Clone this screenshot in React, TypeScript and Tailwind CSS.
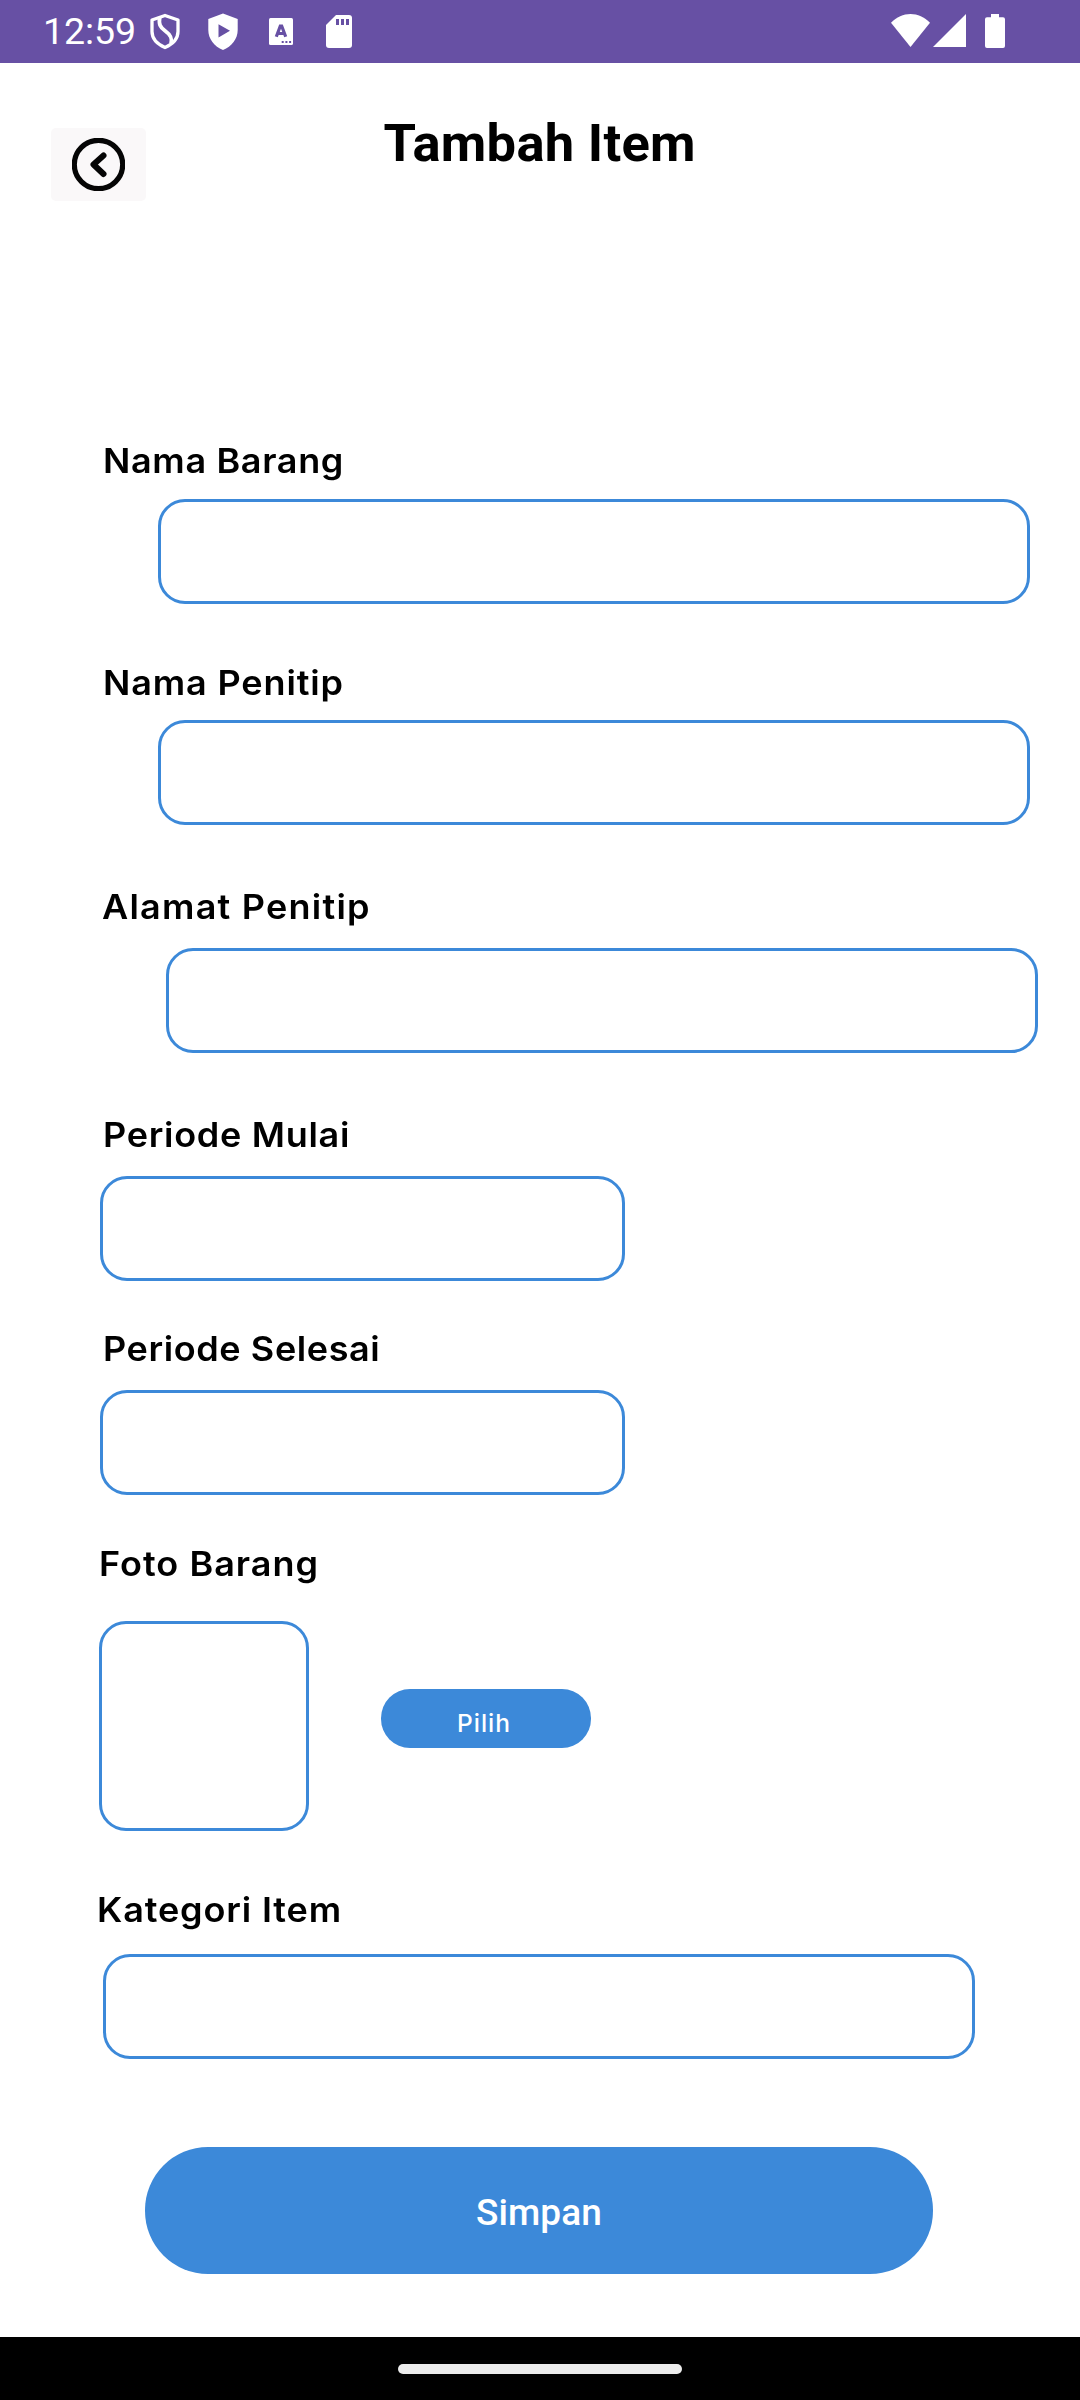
import React from "react";

type FieldProps = {
  label: string;
  labelClass: string;
  boxClass: string;
};

const labelBase =
  "block w-max h-[44px] origin-left scale-x-[1.06] whitespace-nowrap font-[Inter,sans-serif] text-[34px] leading-[44px] font-semibold text-black";
const boxBase = "block rounded-[27px] border-[3px] border-[#3c89d9] bg-white outline-none";

function Field({ label, labelClass, boxClass }: FieldProps) {
  return (
    <label className="block">
      <span className={`${labelBase} ${labelClass}`}>{label}</span>
      <input type="text" aria-label={label} className={`${boxBase} h-[105px] px-6 ${boxClass}`} />
    </label>
  );
}

function StatusBar() {
  return (
    <header className="flex h-[63px] items-start bg-[#6750a4] text-white">
      <span className="ml-[43px] mt-[9px] h-[44px] w-[107px] text-[37.5px] leading-[44px] tracking-[-0.1px]">12:59</span>
      <svg className="mt-[13px] h-[37px] w-[30px]" viewBox="0 0 30 37" fill="none" stroke="currentColor" strokeWidth="3.300">
        <path d="M15 2.500 28 7v11.500c0 6.500-5 12.500-13 16C7 31 2 25 2 18.500V7Z" strokeLinejoin="round" />
        <path d="M9.700 4c-1 7.500.2 10 5.300 13.700 6 4.300 7.500 7.800 6 13" strokeWidth="3.800" />
      </svg>
      <svg className="ml-[28px] mt-[13px] h-[37px] w-[30px]" viewBox="0 0 30 37" fill="currentColor">
        <path fillRule="evenodd" d="M15 .4 29.700 6v11c0 9-6 16.500-14.700 20C6.300 33.500.3 26 .3 17V6ZM10.500 11.200v13.300L22 17.800Z" />
      </svg>
      <svg className="ml-[31px] mt-[18px] h-[27px] w-[24px]" viewBox="0 0 24 27">
        <rect width="24" height="27" rx="1.500" fill="currentColor" />
        <path d="M7.300 18.800 11.300 8h1.400l4 10.800M9 15.500h6" fill="none" stroke="#6750a4" strokeWidth="3.200" />
        <path d="M12.700 23h2v2h-2ZM16.400 23h2v2h-2ZM20.100 23h2v2h-2Z" fill="#6750a4" />
      </svg>
      <svg className="ml-[33px] mt-[15px] h-[33px] w-[26px]" viewBox="0 0 26 33">
        <path d="M10 0h13q3 0 3 3v27q0 3-3 3H3q-3 0-3-3V10Z" fill="currentColor" />
        <path d="M10 4h3v6h-3ZM15 4h3v6h-3ZM20 4h3v6h-3Z" fill="#6750a4" />
      </svg>
      <svg className="ml-auto mt-[14px] h-[33px] w-[39px]" viewBox="0 0 39 33" fill="currentColor">
        <path d="M0 8.800C11-2.900 28-2.900 39 8.800L19.500 33Z" />
      </svg>
      <svg className="ml-[3px] mt-[14px] h-[33px] w-[33px]" viewBox="0 0 33 33" fill="currentColor">
        <path d="M33 0v33H0Z" />
      </svg>
      <svg className="ml-[19px] mr-[75px] mt-[14px] h-[34px] w-[20px]" viewBox="0 0 20 34" fill="currentColor">
        <path d="M6 0h8v3.300h4q2 0 2 2V32q0 2-2 2H2q-2 0-2-2V5.300q0-2 2-2h4Z" />
      </svg>
    </header>
  );
}

export default function App() {
  return (
    <div className="flex h-[2400px] w-[1080px] flex-col overflow-hidden bg-white font-[Roboto,sans-serif]">
      <StatusBar />

      <div className="flex h-[376px] items-start">
        <button aria-label="Kembali" className="ml-[51px] mt-[65px] flex h-[73px] w-[95px] items-center justify-center rounded-[5px] bg-[#faf8f9]">
          <svg className="h-[53px] w-[53px] blur-[0.7px]" viewBox="0 0 53 53" fill="none" stroke="#050505">
            <circle cx="26.500" cy="26.500" r="24.200" strokeWidth="5.200" />
            <path d="M31.500 17.500 21.500 26.500l10 9.500" strokeWidth="6" strokeLinecap="round" strokeLinejoin="round" />
          </svg>
        </button>
        <h1 className="ml-[237.5px] mt-[48px] whitespace-nowrap text-[52.5px] font-bold leading-[64px] tracking-[0.28px] text-black">Tambah Item</h1>
      </div>

      <form className="flex flex-col" onSubmit={(e) => e.preventDefault()}>
        <Field label="Nama Barang" labelClass="ml-[102.5px] tracking-[0.6px]" boxClass="ml-[158px] mt-[16px] w-[872px]" />
        <div className="h-[57px]" />
        <Field label="Nama Penitip" labelClass="ml-[102.5px] tracking-[0.8px]" boxClass="ml-[158px] mt-[15px] w-[872px]" />
        <div className="h-[60px]" />
        <Field label="Alamat Penitip" labelClass="ml-[102px] tracking-[1.15px]" boxClass="ml-[166px] mt-[19px] w-[872px]" />
        <div className="h-[60px]" />
        <Field label="Periode Mulai" labelClass="ml-[102.5px] tracking-[0.65px]" boxClass="ml-[100px] mt-[19px] w-[525px]" />
        <div className="h-[46px]" />
        <Field label="Periode Selesai" labelClass="ml-[102.5px] tracking-[0.55px]" boxClass="ml-[100px] mt-[19px] w-[525px]" />

        <section className="mt-[47px]">
          <span className={`${labelBase} ml-[98.5px] tracking-[0.95px]`}>Foto Barang</span>
          <div className="ml-[99px] mt-[35px] flex items-start">
            <div className={`${boxBase} h-[210px] w-[210px]`} />
            <button className="ml-[72px] mt-[68px] h-[59px] w-[210px] rounded-[29px] bg-[#3c89d9] pt-[9px] pr-[4px] font-[Inter,sans-serif] text-[24.5px] font-medium leading-[50px] tracking-[1px] text-white">
              Pilih
            </button>
          </div>
        </section>

        <div className="h-[57px]" />
        <Field label="Kategori Item" labelClass="ml-[97px] tracking-[0.8px]" boxClass="ml-[103px] mt-[22px] w-[872px]" />

        <button className="ml-[145px] mt-[88px] h-[127px] w-[788px] rounded-[63px] bg-[#3c89d9] pt-[4px] text-[37px] font-medium tracking-[0.1px] text-white">
          Simpan
        </button>
      </form>

      <footer className="mt-auto flex h-[63px] items-start justify-center bg-black pt-[27px]">
        <div className="h-[10px] w-[284px] rounded-[5px] bg-[#ececec]" />
      </footer>
    </div>
  );
}
